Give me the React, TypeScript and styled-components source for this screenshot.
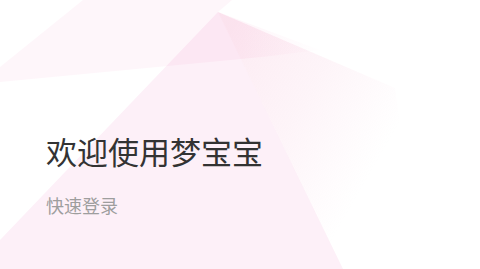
import styled, { createGlobalStyle } from "styled-components";

const GlobalStyle = createGlobalStyle`
  html, body {
    margin: 0;
    padding: 0;
    background: #ffffff;
  }
  body {
    font-family: "Noto Sans CJK SC", "Noto Sans", sans-serif;
  }
`;

const Page = styled.div`
  position: relative;
  width: 480px;
  height: 269px;
  overflow: hidden;
  background: #ffffff;
`;

const Backdrop = styled.svg`
  position: absolute;
  inset: 0;
  width: 100%;
  height: 100%;
  z-index: 0;

  polygon {
    mix-blend-mode: multiply;
  }
`;

const Content = styled.div`
  position: relative;
  z-index: 1;
  display: flex;
  flex-direction: column;
  gap: 30px;
  padding: 135px 0 0 46px;
`;

const Title = styled.h1`
  margin: 0;
  font-size: 31px;
  line-height: 31px;
  font-weight: 400;
  color: #333333;
`;

const Subtitle = styled.div`
  font-size: 18px;
  line-height: 18px;
  color: #9e9e9e;
`;

// decorative pink facets behind the text
const Shapes = () => (
  <Backdrop viewBox="0 0 480 269" preserveAspectRatio="none">
    <defs>
      <linearGradient id="facetRight" x1="225" y1="45" x2="390" y2="140" gradientUnits="userSpaceOnUse">
        <stop offset="0" stopColor="#f7c3da" stopOpacity="0.32" />
        <stop offset="0.5" stopColor="#f7c3da" stopOpacity="0.18" />
        <stop offset="1" stopColor="#f7c3da" stopOpacity="0" />
      </linearGradient>
      <linearGradient id="facetTop" x1="40" y1="40" x2="330" y2="40" gradientUnits="userSpaceOnUse">
        <stop offset="0" stopColor="#fef6fa" />
        <stop offset="0.7" stopColor="#fef6fa" />
        <stop offset="1" stopColor="#ffffff" />
      </linearGradient>
    </defs>
    <polygon points="0,67 83,0 232,0 218,12 320,50 262,57 0,82" fill="url(#facetTop)" />
    <polygon points="0,240 218,12 343,269 0,269" fill="#fdf0f8" />
    <polygon points="218,12 395,88 420,269 343,269" fill="url(#facetRight)" />
  </Backdrop>
);

export default function App() {
  return (
    <>
      <GlobalStyle />
      <Page>
        <Shapes />
        <Content>
          <Title>欢迎使用梦宝宝</Title>
          <Subtitle>快速登录</Subtitle>
        </Content>
      </Page>
    </>
  );
}
